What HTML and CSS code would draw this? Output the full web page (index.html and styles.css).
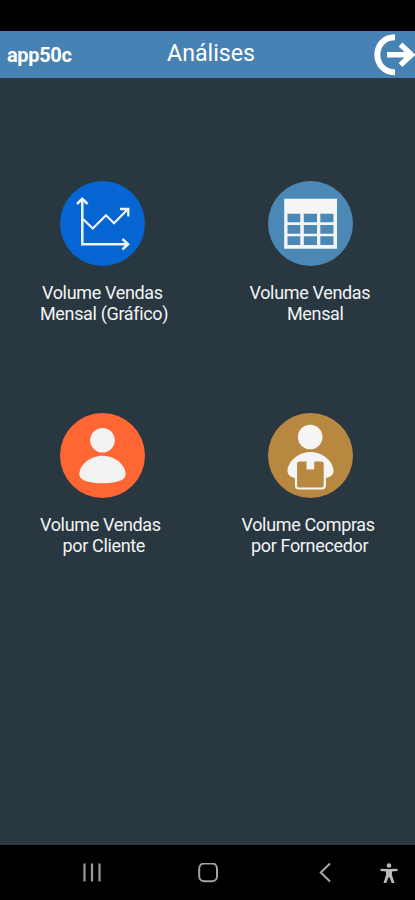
FILE: index.html
```html
<!DOCTYPE html>
<html lang="pt">
<head>
<meta charset="utf-8">
<title>Análises</title>
<link rel="stylesheet" href="styles.css">
</head>
<body>
<div class="status"></div>
<header class="bar">
  <span class="brand">app50c</span>
  <h1 class="title">Análises</h1>
  <svg class="exit" viewBox="0 0 42 47" fill="none" stroke="#fff" stroke-width="6"><path d="M22 6.200C-1.500 6.200 -1.500 41.300 22 41.300" /><path d="M14 23.800H39M27.500 13.500L38.500 23.800L27.500 34.100" stroke-width="5.500"/></svg>
</header>
<main class="grid">
  <a class="tile">
    <svg class="icon" viewBox="0 0 85 85"><circle cx="42.500" cy="42.500" r="42.500" fill="#0565d2"/><g fill="none" stroke="#eef3fc" stroke-width="2.500"><path d="M22.300 18V63.200H68M17 23L22.300 17.700L27.600 23M62.500 58L68 63.200L62.500 68.500"/><path d="M23 38L32.800 47.500L46 34.300L54 42.200L67.500 28.500M60 28H68.300V35.500" stroke-width="2.300"/></g></svg>
    <span class="label"><span class="line l1a">Volume Vendas</span><span class="line l1b">Mensal (Gráfico)</span></span>
  </a>
  <a class="tile">
    <svg class="icon" viewBox="0 0 85 85"><circle cx="42.500" cy="42.500" r="42.500" fill="#4b88b5"/><path fill="#f5f5f5" fill-rule="evenodd" d="M16.200 17.700H69V67.700H16.200ZM19.500 32.700V41.200H32.300V32.700ZM35.800 32.700V41.200H49V32.700ZM52.300 32.700V41.200H65.500V32.700ZM19.500 44V52.700H32.300V44ZM35.800 44V52.700H49V44ZM52.300 44V52.700H65.500V44ZM19.500 55.300V64H32.300V55.300ZM35.800 55.300V64H49V55.300ZM52.300 55.300V64H65.500V55.300Z"/></svg>
    <span class="label"><span class="line l2a">Volume Vendas</span><span class="line l2b">Mensal</span></span>
  </a>
  <a class="tile">
    <svg class="icon" viewBox="0 0 85 85"><circle cx="42.500" cy="42.500" r="42.500" fill="#ff6633"/><g fill="#f2f2f2"><circle cx="42.500" cy="27.300" r="12.300"/><path d="M42.500 42.700C30 42.700 19.300 52 19.300 61.500C19.300 67.500 30 70.300 42.500 70.300S65.700 67.500 65.700 61.500C65.700 52 55 42.700 42.500 42.700Z"/></g></svg>
    <span class="label"><span class="line l3a">Volume Vendas</span><span class="line l3b">por Cliente</span></span>
  </a>
  <a class="tile">
    <svg class="icon" viewBox="0 0 85 85"><circle cx="42.500" cy="42.500" r="42.500" fill="#b98840"/><g fill="#f5f5f5"><circle cx="42.200" cy="24" r="12.300"/><path d="M42.500 39C30 39 19.500 49 19.500 58C19.500 62 23 64.500 29 65.500H56C62 64.500 65.500 62 65.500 58C65.500 49 55 39 42.500 39Z"/></g><rect x="28" y="47.500" width="28.800" height="28" rx="3" fill="#b98840" stroke="#f5f5f5" stroke-width="2.200"/><path d="M38.500 47.500H46.200V56.500H38.500Z" fill="#f5f5f5"/></svg>
    <span class="label"><span class="line l4a">Volume Compras</span><span class="line l4b">por Fornecedor</span></span>
  </a>
</main>
<nav class="nav">
  <svg class="recents" viewBox="0 0 20 20" stroke="#999" stroke-width="2.200"><path d="M2.500 .5V18.500M10 .5V18.500M17.500 .5V18.500"/></svg>
  <svg class="home" viewBox="0 0 20 20" fill="none" stroke="#a3a3a3" stroke-width="2"><rect x="1.200" y=".5" width="17.800" height="17.800" rx="5"/></svg>
  <svg class="back" viewBox="0 0 12 20" fill="none" stroke="#aaa" stroke-width="2"><path d="M11 .5L1.800 9.500L11 18.500"/></svg>
  <svg class="access" viewBox="0 0 18 20" fill="#b8b8b8"><circle cx="9" cy="2.500" r="2.300"/><path d="M.5 5.800L9 6.100L17.500 5.800V8L12 8.600V12L14.500 20H11.700L9.600 14.500H8.400L6.300 20H3.500L6 12V8.600L.5 8Z"/></svg>
</nav>
</body>
</html>
```
FILE: styles.css
```css
* { box-sizing: border-box; }
body {
  margin: 0;
  height: 900px;
  display: flex;
  flex-direction: column;
  overflow: hidden;
  background: #000;
  color: #f2f4f5;
  font-family: Roboto, "Liberation Sans", sans-serif;
}
svg { display: block; flex: none; }
.status { height: 31px; }
.bar {
  height: 47px;
  display: flex;
  background: #4682b4;
  color: #fff;
}
.brand {
  width: 167px;
  padding: 12px 0 0 7px;
  font-size: 20px;
  line-height: 24px;
  letter-spacing: -.35px;
  font-weight: 700;
}
.title {
  flex: 1;
  margin: 0;
  padding-top: 8px;
  font-size: 23.2px;
  line-height: 28px;
  font-weight: 400;
}
.exit { width: 42px; height: 47px; }
.grid {
  height: 767px;
  display: grid;
  grid-template-columns: 207.5px 207.5px;
  grid-auto-rows: 232px;
  padding-top: 103px;
  background: #293740;
}
.tile { display: flex; flex-direction: column; }
.icon { width: 85px; height: 85px; margin-left: 60px; }
.label {
  display: block;
  margin-top: 17px;
  font-size: 18px;
  line-height: 20.5px;
  letter-spacing: -.35px;
  white-space: nowrap;
}
.line { display: block; }
.l1a { margin-left: 42px; }
.l1b { margin-left: 40px; }
.l2a { margin-left: 42px; }
.l2b { margin-left: 79.5px; }
.l3a { margin-left: 40px; }
.l3b { margin-left: 62.5px; }
.l4a { margin-left: 34px; }
.l4b { margin-left: 43.5px; }
.nav {
  height: 55px;
  display: flex;
  align-items: center;
  padding-left: 82px;
}
.recents { width: 20px; height: 20px; }
.home { width: 20px; height: 20px; margin-left: 96px; }
.back { width: 12px; height: 20px; margin-left: 101px; }
.access { width: 18px; height: 20px; margin-left: 49px; }
```
